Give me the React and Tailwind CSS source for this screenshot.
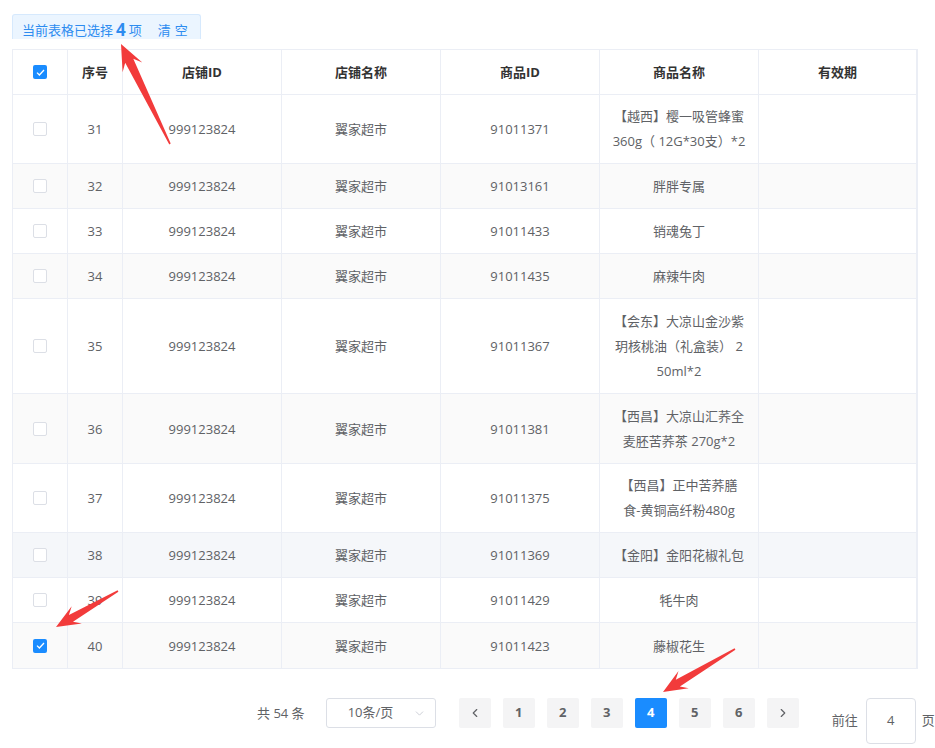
import React from "react";
import { ChevronLeft, ChevronRight, ChevronDown } from "lucide-react";

const rows = [
  { no: 31, pid: "91011371", name: ["【越西】樱一吸管蜂蜜", "360g（ 12G*30支）*2"], h: "h-[69px]" },
  { no: 32, pid: "91013161", name: ["胖胖专属"], h: "h-[45px]" },
  { no: 33, pid: "91011433", name: ["销魂兔丁"], h: "h-[45px]" },
  { no: 34, pid: "91011435", name: ["麻辣牛肉"], h: "h-[45px]" },
  { no: 35, pid: "91011367", name: ["【会东】大凉山金沙紫", "玥核桃油（礼盒装） 2", "50ml*2"], h: "h-[95px]" },
  { no: 36, pid: "91011381", name: ["【西昌】大凉山汇荞全", "麦胚苦荞茶 270g*2"], h: "h-[70px]" },
  { no: 37, pid: "91011375", name: ["【西昌】正中苦荞膳", "食-黄铜高纤粉480g"], h: "h-[69px]" },
  { no: 38, pid: "91011369", name: ["【金阳】金阳花椒礼包"], hover: true, h: "h-[45px]" },
  { no: 39, pid: "91011429", name: ["牦牛肉"], h: "h-[45px]" },
  { no: 40, pid: "91011423", name: ["藤椒花生"], checked: true, h: "h-[45px]" },
];

function Checkbox({ checked }) {
  return checked ? (
    <span className="flex h-[14px] w-[14px] items-center justify-center rounded-[2px] bg-[#1a8cff]">
      <svg width="9" height="7" viewBox="0 0 9 7" fill="none">
        <path d="M1 3.6 L3.4 6 L8 1" stroke="white" strokeWidth="1.3" />
      </svg>
    </span>
  ) : (
    <span className="block h-[14px] w-[14px] rounded-[2px] border border-[#dcdfe6] bg-white" />
  );
}

function arrowPoints(tx, ty, px, py, h = 26, hw = 11, sw = 4.5) {
  const dx = px - tx;
  const dy = py - ty;
  const L = Math.sqrt(dx * dx + dy * dy);
  const ux = dx / L;
  const uy = dy / L;
  const nx = -uy;
  const ny = ux;
  const p = (d, n) => [tx + ux * d + nx * n, ty + uy * d + ny * n];
  const pts = [
    p(0, 0.8),
    p(L - h * 0.72, sw),
    p(L - h, hw),
    [px, py],
    p(L - h, -hw),
    p(L - h * 0.72, -sw),
    p(0, -0.8),
  ];
  return pts.map((q) => q[0].toFixed(1) + "," + q[1].toFixed(1)).join(" ");
}

const grid = "grid grid-cols-[55px_55px_159px_159px_159px_159px_1fr]";
const cell =
  "flex items-center justify-center text-center border-r border-[#ebeef5] px-[10px] leading-[24px]";

export default function App() {
  return (
    <div
      className="relative h-[748px] w-[935px] overflow-hidden bg-white text-[13px] text-[#606266]"
      style={{ fontFamily: '"Open Sans", "Noto Sans CJK SC", sans-serif' }}
    >
      <div className="pl-[12px] pt-[14px]">
        <div className="flex h-[25px] w-[189px] items-end rounded-t-[3px] border border-b-0 border-[#d6e9fd] bg-[#ebf5ff] pl-[9px] pb-0 text-[13px] leading-[18px] text-[#2d8cf0]">
          <span>当前表格已选择</span>
          <span className="mx-[3px] text-[17px] font-bold leading-[18px]">4</span>
          <span>项</span>
          <span className="ml-[16px] tracking-[4px]">清空</span>
        </div>

        <div className="mt-[10px] w-[906px] border border-r-2 border-[#ebeef5]">
          <div className={grid + " h-[45px] border-b border-[#ebeef5] font-bold text-[#333]"}>
            <div className={cell}>
              <Checkbox checked />
            </div>
            <div className={cell}>序号</div>
            <div className={cell}>店铺ID</div>
            <div className={cell}>店铺名称</div>
            <div className={cell}>商品ID</div>
            <div className={cell}>商品名称</div>
            <div className={cell + " border-r-0"}>有效期</div>
          </div>
          {rows.map((r, i) => (
            <div
              key={r.no}
              className={
                grid +
                " " +
                r.h +
                " border-[#ebeef5] " +
                (i < rows.length - 1 ? "border-b " : "") +
                (r.hover ? "bg-[#f5f7fa]" : i % 2 === 1 ? "bg-[#fafafa]" : "bg-white")
              }
            >
              <div className={cell}>
                <Checkbox checked={r.checked} />
              </div>
              <div className={cell}>{r.no}</div>
              <div className={cell}>999123824</div>
              <div className={cell}>翼家超市</div>
              <div className={cell}>{r.pid}</div>
              <div className={cell + " flex-col"}>
                {r.name.map((t, k) => (
                  <span key={k} className={"whitespace-nowrap " + (r.name.length > 1 ? "leading-[25px]" : "")}>
                    {t}
                  </span>
                ))}
              </div>
              <div className={cell + " border-r-0"} />
            </div>
          ))}
        </div>

        <div className="mt-[29px] flex items-start pl-[245px] text-[13px]">
          <span className="mr-[21px] mt-[6px] leading-[18px] text-[#606266]">共 54 条</span>
          <div className="flex h-[30px] w-[110px] items-center rounded-[3px] border border-[#dcdfe6] pl-[21px] pr-[9px] text-[#606266]">
            <span className="flex-1">10条/页</span>
            <ChevronDown size={13} strokeWidth={1.5} className="text-[#c0c4cc]" />
          </div>
          <div className="ml-[23px] flex gap-[12px] font-bold">
            <span className="flex h-[30px] w-[32px] items-center justify-center rounded-[2px] bg-[#f4f4f5] text-[#606266]">
              <ChevronLeft size={14} strokeWidth={2} />
            </span>
            {[1, 2, 3, 4, 5, 6].map((n) => (
              <span
                key={n}
                className={
                  "flex h-[30px] w-[32px] items-center justify-center rounded-[2px] " +
                  (n === 4 ? "bg-[#1a8cff] text-white" : "bg-[#f4f4f5] text-[#606266]")
                }
              >
                {n}
              </span>
            ))}
            <span className="flex h-[30px] w-[32px] items-center justify-center rounded-[2px] bg-[#f4f4f5] text-[#606266]">
              <ChevronRight size={14} strokeWidth={2} />
            </span>
          </div>
          <div className="ml-[33px] flex items-center whitespace-nowrap text-[#606266]">
            <span>前往</span>
            <span className="ml-[8px] flex h-[46px] w-[50px] items-center justify-center rounded-[4px] border border-[#dcdfe6]">
              4
            </span>
            <span className="ml-[6px]">页</span>
          </div>
        </div>
      </div>

      <svg className="pointer-events-none absolute left-0 top-0" width="935" height="748">
        <polygon points={arrowPoints(170, 144, 121, 44)} fill="#f23b3b" />
        <polygon points={arrowPoints(118, 591, 56, 627, 24, 10, 4)} fill="#f23b3b" />
        <polygon points={arrowPoints(735, 649, 663, 692, 24, 10, 4)} fill="#f23b3b" />
      </svg>
    </div>
  );
}
